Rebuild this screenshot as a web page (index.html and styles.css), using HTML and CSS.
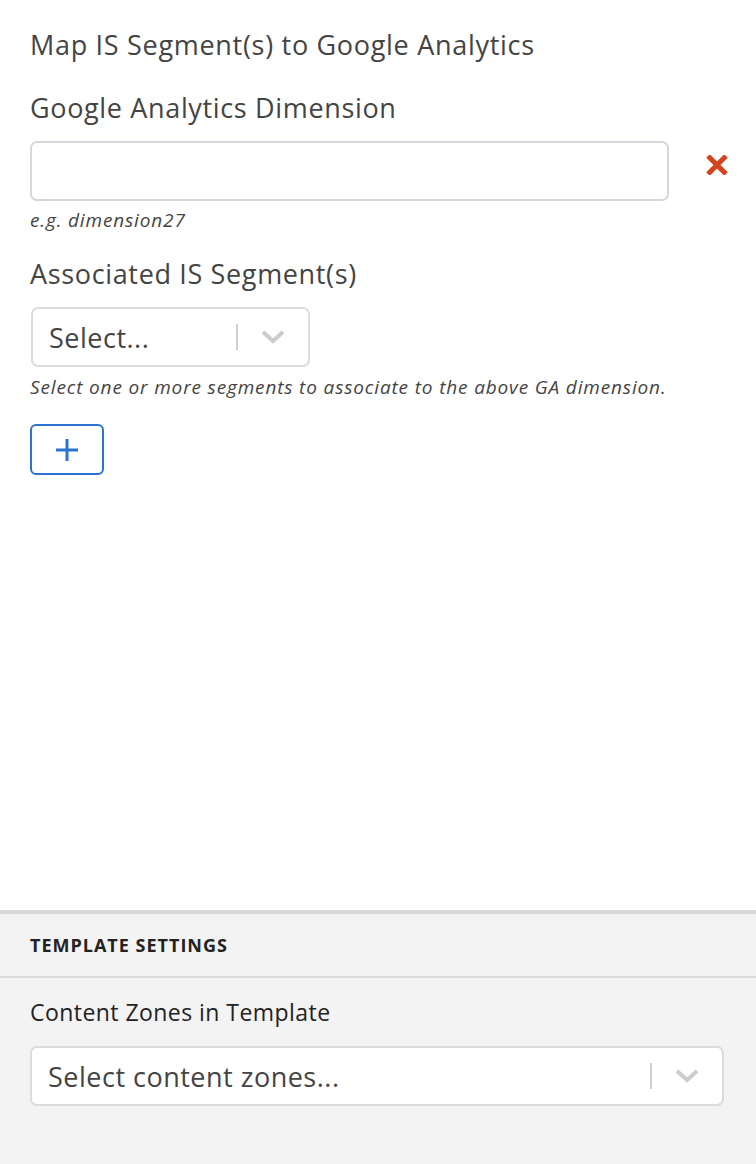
FILE: index.html
```html
<!DOCTYPE html>
<html>
<head>
<meta charset="utf-8">
<link rel="stylesheet" href="styles.css">
</head>
<body>
<div class="page">
  <section class="main">
    <h2 class="title">Map IS Segment(s) to Google Analytics</h2>
    <div class="field">
      <label class="label">Google Analytics Dimension</label>
      <div class="input-row">
        <div class="text-input"></div>
        <svg class="remove" width="24" height="20" viewBox="0 0 24 20"><path d="M3 1 L21 19 M21 1 L3 19" stroke="#d4441c" stroke-width="5" stroke-linecap="butt"/></svg>
      </div>
      <div class="help">e.g. dimension27</div>
    </div>
    <div class="field seg">
      <label class="label">Associated IS Segment(s)</label>
      <div class="select small">
        <span class="placeholder">Select...</span>
        <span class="sep"></span>
        <svg class="chev" width="24" height="14" viewBox="0 0 24 14"><path d="M2 2 L12 11 L22 2" fill="none" stroke="#cccccc" stroke-width="4"/></svg>
      </div>
      <div class="help">Select one or more segments to associate to the above GA dimension.</div>
    </div>
    <button class="add">
      <svg width="24" height="24" viewBox="0 0 24 24"><path d="M12 1 V23 M1 12 H23" stroke="#2c72d0" stroke-width="3"/></svg>
    </button>
  </section>
  <section class="settings">
    <div class="settings-head">TEMPLATE SETTINGS</div>
    <div class="settings-body">
      <div class="zones-label">Content Zones in Template</div>
      <div class="select wide">
        <span class="placeholder">Select content zones...</span>
        <span class="sep"></span>
        <svg class="chev" width="24" height="14" viewBox="0 0 24 14"><path d="M2 2 L12 11 L22 2" fill="none" stroke="#cccccc" stroke-width="4"/></svg>
      </div>
    </div>
  </section>
</div>
</body>
</html>
```

FILE: styles.css
```css
* { box-sizing: border-box; }
html, body { margin: 0; padding: 0; background: #fff; }
body { font-family: "Open Sans", "Liberation Sans", sans-serif; color: #444; }
.page { width: 756px; height: 1164px; display: flex; flex-direction: column; }
.main { flex: 1; padding: 26px 30px 0 30px; display: flex; flex-direction: column; }
.title { margin: 0; font-size: 27px; font-weight: 400; line-height: 38px; color: #444; letter-spacing: 0.7px; white-space: nowrap; }
.field { margin-top: 27px; }
.label { display: block; font-size: 27px; line-height: 34px; color: #444; letter-spacing: 0.65px; white-space: nowrap; }
.input-row { display: flex; align-items: flex-start; margin-top: 16px; }
.text-input { flex: 0 0 639px; height: 60px; border: 2px solid #d4d8dc; border-radius: 7px; background: #fff; }
.remove { flex: 0 0 auto; margin-left: 36px; margin-top: 14px; }
.help { font-size: 19px; font-style: italic; color: #444; line-height: 26px; margin-top: 6px; letter-spacing: 0.85px; white-space: nowrap; }
.seg { margin-top: 24px; }
.select { display: flex; align-items: center; height: 60px; border: 2px solid #dcdcdc; border-radius: 7px; background: #fff; padding-left: 16px; }
.select.small { width: 279px; margin-top: 16px; margin-left: 1px; }
.select .placeholder { flex: 1; font-size: 27px; color: #444; letter-spacing: 0.5px; white-space: nowrap; }
.select .sep { width: 2px; height: 26px; background: #d0d0d0; }
.select .chev { margin: 0 23px 0 23px; }
.seg .help { margin-top: 7px; }
.add { margin-top: 24px; width: 74px; height: 51px; border: 2px solid #2c72d0; border-radius: 6px; background: #fff; display: flex; align-items: center; justify-content: center; padding: 0; }
.settings { height: 254px; background: #f3f3f3; border-top: 4px solid #d8d7d5; }
.settings-head { height: 64px; display: flex; align-items: center; padding-left: 30px; font-size: 18px; font-weight: 700; color: #222; border-bottom: 2px solid #dcdcdc; letter-spacing: 1px; }
.settings-body { padding: 18px 30px 0 30px; }
.zones-label { font-size: 23px; color: #222; line-height: 32px; letter-spacing: 0.45px; }
.select.wide { width: 694px; margin-top: 18px; }
```
